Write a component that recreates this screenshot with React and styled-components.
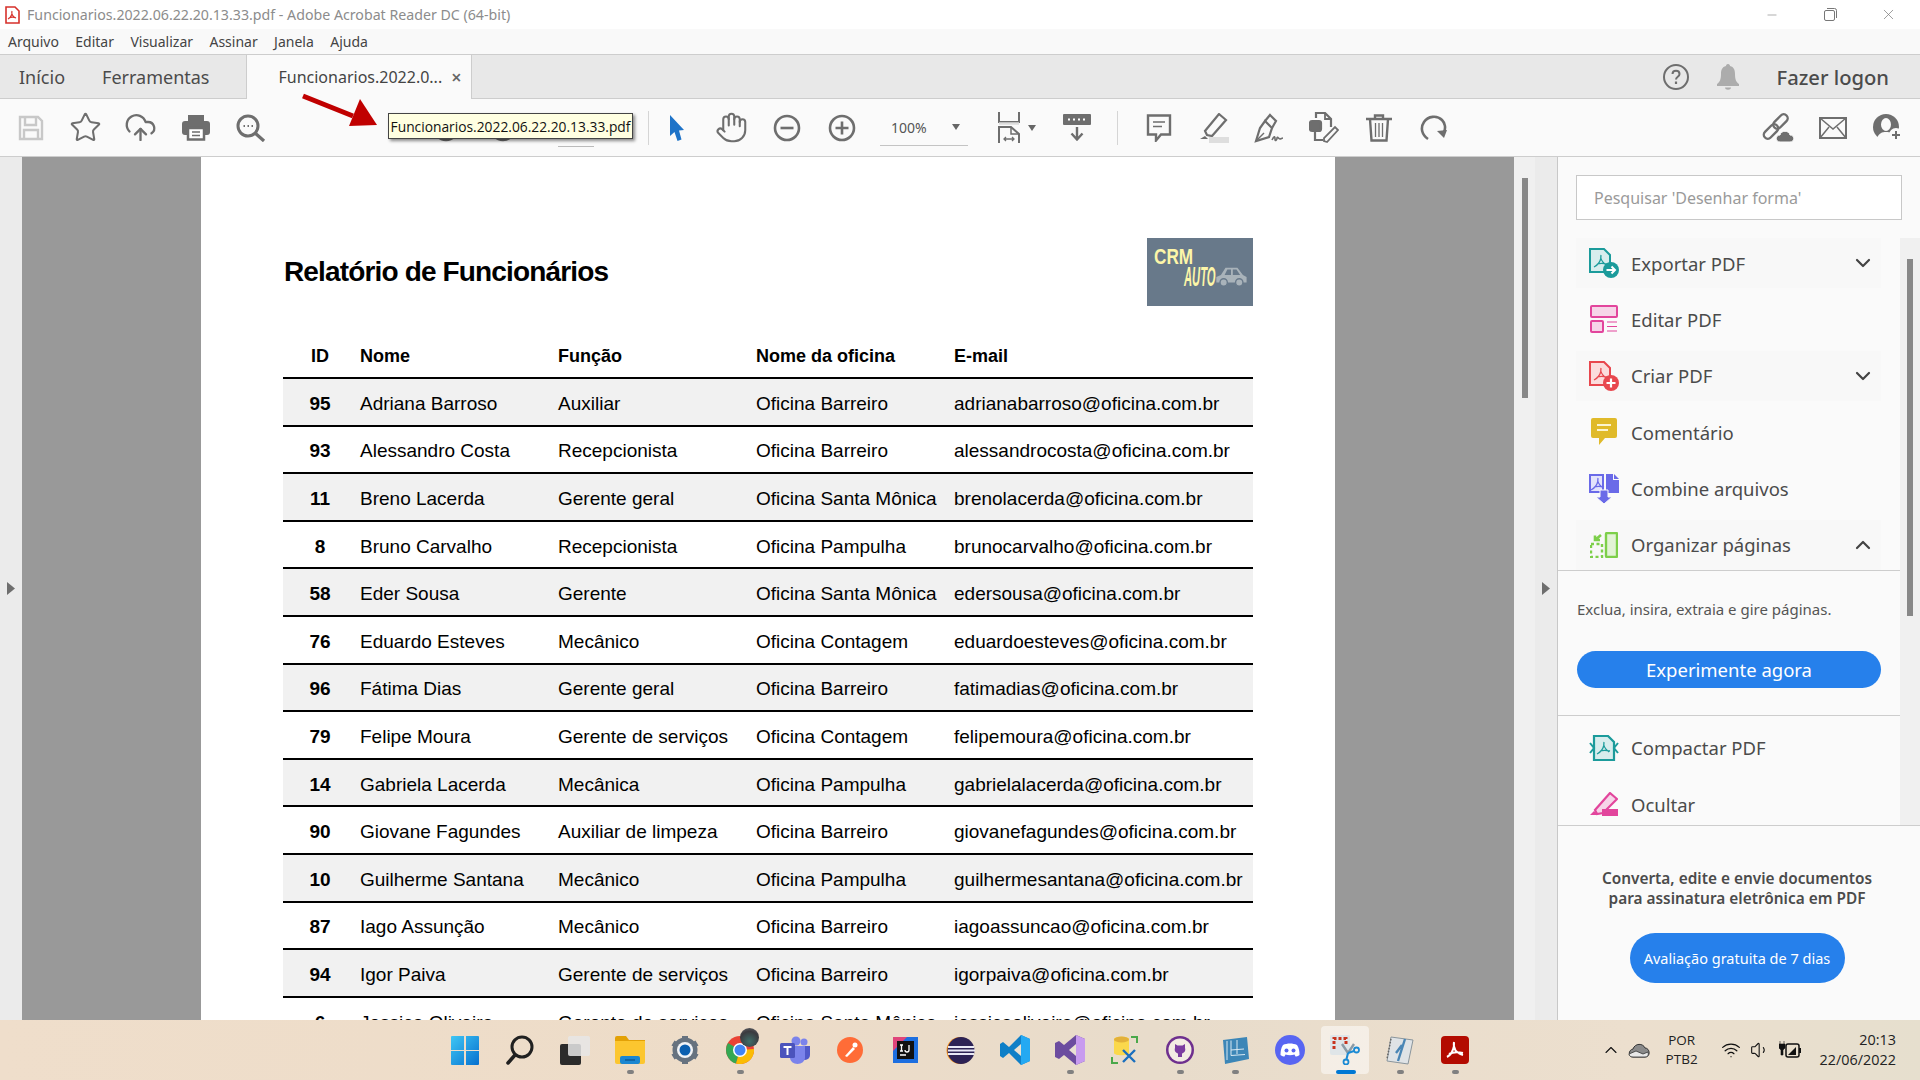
import React from 'react';
import styled, { createGlobalStyle } from 'styled-components';
import { Star, CloudUpload, Hand, ChevronDown, ChevronUp, X, Minus, Wifi, Volume1 } from 'lucide-react';

const employees = [
  [95, 'Adriana Barroso', 'Auxiliar', 'Oficina Barreiro', 'adrianabarroso@oficina.com.br'],
  [93, 'Alessandro Costa', 'Recepcionista', 'Oficina Barreiro', 'alessandrocosta@oficina.com.br'],
  [11, 'Breno Lacerda', 'Gerente geral', 'Oficina Santa Mônica', 'brenolacerda@oficina.com.br'],
  [8, 'Bruno Carvalho', 'Recepcionista', 'Oficina Pampulha', 'brunocarvalho@oficina.com.br'],
  [58, 'Eder Sousa', 'Gerente', 'Oficina Santa Mônica', 'edersousa@oficina.com.br'],
  [76, 'Eduardo Esteves', 'Mecânico', 'Oficina Contagem', 'eduardoesteves@oficina.com.br'],
  [96, 'Fátima Dias', 'Gerente geral', 'Oficina Barreiro', 'fatimadias@oficina.com.br'],
  [79, 'Felipe Moura', 'Gerente de serviços', 'Oficina Contagem', 'felipemoura@oficina.com.br'],
  [14, 'Gabriela Lacerda', 'Mecânica', 'Oficina Pampulha', 'gabrielalacerda@oficina.com.br'],
  [90, 'Giovane Fagundes', 'Auxiliar de limpeza', 'Oficina Barreiro', 'giovanefagundes@oficina.com.br'],
  [10, 'Guilherme Santana', 'Mecânico', 'Oficina Pampulha', 'guilhermesantana@oficina.com.br'],
  [87, 'Iago Assunção', 'Mecânico', 'Oficina Barreiro', 'iagoassuncao@oficina.com.br'],
  [94, 'Igor Paiva', 'Gerente de serviços', 'Oficina Barreiro', 'igorpaiva@oficina.com.br'],
  [6, 'Jessica Oliveira', 'Gerente de serviços', 'Oficina Santa Mônica', 'jessicaoliveira@oficina.com.br'],
];

const GRAY = '#6e6e6e';

// Adobe swirl used inside the pdf icons
const Swirl = ({ color, x = 0, y = 0 }) => (
  <path
    d={`M${x + 7} ${y}c-1 4 1 7 5 10M${x + 7} ${y + 3}c-1 4-3 7-7 9M${x + 3} ${y + 9}c3-1 6-1 10 0`}
    fill="none"
    stroke={color}
    strokeWidth="1.3"
  />
);

const SaveIcon = () => (
  <svg width="26" height="26" viewBox="0 0 26 26" fill="none" stroke="#c8c8c8" strokeWidth="2.4">
    <path d="M2 2h18l4 4v18H2z" />
    <path d="M7 2v8h11V2M6 24v-9h14v9" />
  </svg>
);

const PrintIcon = () => (
  <svg width="28" height="27" viewBox="0 0 28 27">
    <path d="M6 1h16v7H6z" fill={GRAY} />
    <rect y="7" width="28" height="14" rx="3" fill={GRAY} />
    <rect x="6" y="14" width="16" height="11.5" fill="#fff" stroke={GRAY} strokeWidth="2.5" />
    <path d="M10 18h8M10 21.5h8" stroke={GRAY} strokeWidth="1.6" />
  </svg>
);

const ZoomIcon = () => (
  <svg width="30" height="28" viewBox="0 0 30 28" fill="none" stroke={GRAY}>
    <circle cx="12" cy="12" r="10" strokeWidth="3" />
    <path d="M19 19l9 8" strokeWidth="3.2" />
    <path d="M7.5 12h1.5M11.5 12h1.5M15.5 12h1.5" strokeWidth="2" />
  </svg>
);

const CircleArrow = ({ up }) => (
  <svg width="28" height="28" viewBox="0 0 28 28" fill="none" stroke={GRAY} strokeWidth="2.4">
    <circle cx="14" cy="14" r="12" />
    <path d={up ? 'M14 20V8M9 13l5-5 5 5' : 'M14 8v12M9 15l5 5 5-5'} />
  </svg>
);

const CursorIcon = () => (
  <svg width="16" height="26" viewBox="0 0 16 26">
    <path d="M1 0l14 15-5 .5 2.5 9-4 1.5L5.500 17 1 21z" fill="#1e73c8" />
  </svg>
);

const CircleSign = ({ plus }) => (
  <svg width="28" height="28" viewBox="0 0 28 28" fill="none" stroke={GRAY} strokeWidth="2.6">
    <circle cx="14" cy="14" r="12" />
    <path d={plus ? 'M7.500 14h13M14 7.500v13' : 'M7.500 14h13'} />
  </svg>
);

const FitIcon = () => (
  <svg width="22" height="31" viewBox="0 0 22 31" fill="none" stroke={GRAY} strokeWidth="2">
    <path d="M1 0v10h20V0" />
    <path d="M1 11.500h20" stroke="#ddd" strokeWidth="2.500" />
    <path d="M1 31V15h12l8 7v9" />
    <path d="M13 15v7h8" strokeWidth="1.500" />
    <path d="M6 27h10M8 25l-2 2 2 2M14 25l2 2-2 2" strokeWidth="1.300" />
  </svg>
);

const KeyboardDownIcon = () => (
  <svg width="28" height="27" viewBox="0 0 28 27">
    <rect width="28" height="11" rx="1" fill={GRAY} />
    <path d="M5 5.500h2M10 5.500h2M15 5.500h2M20 5.500h2" stroke="#fff" strokeWidth="2" />
    <path d="M14 13v12M8.500 19.500l5.500 6 5.500-6" fill="none" stroke={GRAY} strokeWidth="2.400" />
  </svg>
);

const CommentIcon = () => (
  <svg width="26" height="28" viewBox="0 0 26 28" fill="none" stroke={GRAY} strokeWidth="2.400">
    <path d="M2 1.500h22v19h-9l-5 6v-6H2z" />
    <path d="M7 8h12M7 12.500h9" strokeWidth="1.600" />
  </svg>
);

const HighlightIcon = () => (
  <svg width="30" height="30" viewBox="0 0 30 30">
    <path d="M20 1l7 6-14 16-5-1-2-4z" fill="none" stroke={GRAY} strokeWidth="2.200" />
    <path d="M6 23l3 3H1z" fill={GRAY} />
    <rect x="10" y="24" width="20" height="6" fill="#dedede" />
  </svg>
);

const SignIcon = () => (
  <svg width="30" height="30" viewBox="0 0 30 30" fill="none" stroke={GRAY} strokeWidth="2.200">
    <path d="M11 8l7 7-3 9-13 4 4-13z" />
    <path d="M2 28l8-8" strokeWidth="1.500" />
    <path d="M11 8l5-6 6 6-4 7" />
    <path d="M18 27c2-4 3-4 3-1s2 1 2-1 2 1 3 1 2-1 3-1" strokeWidth="1.600" />
  </svg>
);

const EditDocIcon = () => (
  <svg width="30" height="31" viewBox="0 0 30 31" fill="none" stroke={GRAY} strokeWidth="2.200">
    <path d="M7 6V1h9l6 6v8" />
    <path d="M16 1v6h6" strokeWidth="1.800" />
    <rect x="1" y="9" width="11" height="10" rx="2" fill={GRAY} />
    <path d="M6 20v8h8" />
    <path d="M18 30l-3-1 0-3 11-11 3 3z" strokeWidth="1.800" />
  </svg>
);

const TrashIcon = () => (
  <svg width="26" height="28" viewBox="0 0 26 28" fill="none" stroke={GRAY} strokeWidth="2.400">
    <path d="M0 5h26M9 5V1.500h8V5" />
    <path d="M4 5l1.500 21.500h15L22 5" />
    <path d="M9.500 9v14M13 9v14M16.500 9v14" strokeWidth="1.300" />
  </svg>
);

const RotateIcon = () => (
  <svg width="28" height="28" viewBox="0 0 28 28" fill="none" stroke={GRAY} strokeWidth="2.600">
    <path d="M8 25C2 21 0 14 4 8c4-6 13-7 18-2 3 3 4 8 2 12" />
    <path d="M17 17l7 7 3-8z" fill={GRAY} stroke="none" />
  </svg>
);

const LinkCloudIcon = () => (
  <svg width="32" height="29" viewBox="0 0 32 29">
    <g fill="none" stroke={GRAY} strokeWidth="2.400">
      <rect x="14.500" y="0" width="8" height="17" rx="4" transform="rotate(45 18.500 8.500)" />
      <rect x="5" y="10" width="8" height="17" rx="4" transform="rotate(45 9 18.500)" />
    </g>
    <path d="M18 29c-5 0-5-7 0-7 1-5 9-5 10 0 5 0 5 7 0 7z" fill={GRAY} stroke="#fafafa" strokeWidth="1" />
  </svg>
);

const MailIcon = () => (
  <svg width="28" height="22" viewBox="0 0 28 22" fill="none" stroke={GRAY} strokeWidth="2">
    <rect x="1" y="1" width="26" height="20" />
    <path d="M1 1l13 11L27 1M1 21l9-11M27 21l-9-11" strokeWidth="1.500" />
  </svg>
);

const UserAddIcon = () => (
  <svg width="30" height="28" viewBox="0 0 30 28">
    <circle cx="13" cy="13" r="13" fill={GRAY} />
    <ellipse cx="13" cy="10.500" rx="5" ry="6.500" fill="#fafafa" />
    <path d="M4 24c2-5 5-6 9-6s7 1 9 6c-4 3-14 3-18 0z" fill="#fafafa" />
    <circle cx="23" cy="21" r="7" fill="#fafafa" />
    <path d="M23 17v8M19 21h8" stroke={GRAY} strokeWidth="2" />
  </svg>
);

const HelpIcon = () => (
  <svg width="26" height="26" viewBox="0 0 26 26" fill="none" stroke={GRAY} strokeWidth="2">
    <circle cx="13" cy="13" r="12" />
    <path d="M9.500 10c0-4.500 7-4.500 7 0 0 3-3.500 2.500-3.500 5.500" strokeWidth="2" />
    <path d="M13 17.500v2.500" strokeWidth="2.200" />
  </svg>
);

const BellIcon = () => (
  <svg width="22" height="26" viewBox="0 0 22 26">
    <path d="M11 0c1.500 0 2 1 2 2 4 1 5 4 5 8 0 5 1 8 4 10v2H0v-2c3-2 4-5 4-10 0-4 1-7 5-8 0-1 .5-2 2-2z" fill="#acacac" />
    <path d="M8 23.500h6c0 3-6 3-6 0z" fill="#acacac" />
  </svg>
);

const RestoreIcon = () => (
  <svg width="13" height="13" viewBox="0 0 13 13" fill="none" stroke="#777" strokeWidth="1">
    <rect x=".5" y="2.500" width="10" height="10" rx="1.500" />
    <path d="M3 .5h7.500a2 2 0 0 1 2 2V10" />
  </svg>
);

const PdfFileIcon = () => (
  <svg width="15" height="18" viewBox="0 0 15 18">
    <path d="M1 1h9l4 4v12H1z" fill="#fff" stroke="#d6312b" strokeWidth="1.600" />
    <path d="M7 5c-1 3 1 6 4 7M7 8c-1 3-2 4-4 5M4 12c2-1 5-1 7 0" fill="none" stroke="#d6312b" strokeWidth="1.200" />
  </svg>
);

const ExportIcon = () => (
  <svg width="30" height="30" viewBox="0 0 30 30">
    <path d="M1 1h14l6 6v17H1z" fill="#d7eded" stroke="#1b9b9b" strokeWidth="2" />
    <Swirl color="#1b9b9b" x={5} y={7} />
    <circle cx="22" cy="22" r="8" fill="#1b9b9b" />
    <path d="M17.500 22h8M22.500 18.500l3.500 3.500-3.500 3.500" fill="none" stroke="#fff" strokeWidth="2" />
  </svg>
);

const EditPdfIcon = () => (
  <svg width="28" height="28" viewBox="0 0 28 28" stroke="#e2459c" fill="#f6d5e8" strokeWidth="2">
    <rect x="1" y="1" width="26" height="11" rx="1" />
    <rect x="1" y="16" width="12" height="11" rx="1" />
    <path d="M17 17h10M17 21.500h10M17 26h10" strokeWidth="1.200" />
  </svg>
);

const CreateIcon = () => (
  <svg width="30" height="30" viewBox="0 0 30 30">
    <path d="M1 1h14l6 6v17H1z" fill="#fbdcdc" stroke="#e8474e" strokeWidth="2" />
    <Swirl color="#e8474e" x={5} y={7} />
    <circle cx="22" cy="22" r="8" fill="#e8474e" />
    <path d="M17.500 22h9M22 17.500v9" stroke="#fff" strokeWidth="2.200" />
  </svg>
);

const NoteIcon = () => (
  <svg width="26" height="28" viewBox="0 0 26 28">
    <path d="M2 0h22a2 2 0 0 1 2 2v16a2 2 0 0 1-2 2H14l-6 7v-7H2a2 2 0 0 1-2-2V2a2 2 0 0 1 2-2z" fill="#e0ba2a" />
    <path d="M6 7h14M6 12h11" stroke="#fbf4d0" strokeWidth="2" />
  </svg>
);

const CombineIcon = () => (
  <svg width="30" height="30" viewBox="0 0 30 30">
    <path d="M1 1h13v17H1z" fill="#e3e3fb" stroke="#6a6ae8" strokeWidth="2" />
    <Swirl color="#6a6ae8" x={2} y={4} />
    <path d="M17 0h7v6h6v13H17z" fill="#6a6ae8" />
    <path d="M25 0l5 5h-5z" fill="#6a6ae8" />
    <path d="M11 16h8v7h4l-8 7-8-7h4z" fill="#6a6ae8" stroke="#fafafa" strokeWidth="1" />
  </svg>
);

const OrganizeIcon = () => (
  <svg width="28" height="26" viewBox="0 0 28 26" fill="none" stroke="#7dcf4a" strokeWidth="2.400">
    <rect x="16" y="1" width="11" height="24" rx="1" fill="#e2f3d6" />
    <path d="M1 12h11v13H1z" strokeDasharray="3 2.500" />
    <path d="M11 3L5 8M5 3.500V8h5" strokeWidth="2.600" />
  </svg>
);

const CompressIcon = () => (
  <svg width="30" height="26" viewBox="0 0 30 26">
    <path d="M5 1h14l6 6v18H5z" fill="#d7eded" stroke="#1b9b9b" strokeWidth="2.200" />
    <Swirl color="#1b9b9b" x={8} y={7} />
    <path d="M1 8l4 5-4 5M29 8l-4 5 4 5" fill="none" stroke="#1b9b9b" strokeWidth="2" />
  </svg>
);

const RedactIcon = () => (
  <svg width="28" height="25" viewBox="0 0 28 25">
    <path d="M20 1l7 6-14 14-6 1-2-4z" fill="#f6d5e8" stroke="#e2459c" strokeWidth="2.200" />
    <path d="M4 19l4 4H0z" fill="#e2459c" />
    <rect x="12" y="17" width="16" height="7" fill="#e2459c" />
  </svg>
);

const PanelTriangle = () => (
  <svg width="8" height="13" viewBox="0 0 8 13">
    <path d="M0 0l8 6.500L0 13z" fill="#6e6e6e" />
  </svg>
);

const ArrowOverlay = () => (
  <svg width="80" height="36" viewBox="0 0 80 36">
    <path d="M1 3l50 20" stroke="#c00000" strokeWidth="5" fill="none" />
    <path d="M75 32L47 33l11-27z" fill="#c00000" />
  </svg>
);

const CarIcon = () => (
  <svg width="34" height="22" viewBox="0 0 36 24">
    <path d="M2 19v-6l5-2 5-8h13l6 8 4 2v6z" fill="#a9b3ba" />
    <path d="M14 5h4v6h-7zM20 5h4l4 6h-8z" fill="#68798a" />
    <circle cx="10" cy="19" r="4" fill="#a9b3ba" stroke="#68798a" strokeWidth="1.500" />
    <circle cx="27" cy="19" r="4" fill="#a9b3ba" stroke="#68798a" strokeWidth="1.500" />
  </svg>
);

// Taskbar apps
const WindowsLogo = () => (
  <svg width="28" height="29" viewBox="0 0 28 29">
    <defs>
      <linearGradient id="winG" x1="0" y1="0" x2="1" y2="1">
        <stop offset="0" stopColor="#3fc6f4" />
        <stop offset="1" stopColor="#0670cf" />
      </linearGradient>
    </defs>
    <path d="M1 0h12v14H0V1a1 1 0 0 1 1-1zM15 0h12a1 1 0 0 1 1 1v13H15zM0 15h13v14H1a1 1 0 0 1-1-1zM15 15h13v13a1 1 0 0 1-1 1H15z" fill="url(#winG)" />
  </svg>
);

const SearchApp = () => (
  <svg width="28" height="30" viewBox="0 0 28 30" fill="none" stroke="#202020">
    <circle cx="16" cy="12" r="10" strokeWidth="3" />
    <path d="M9 20l-7 8" strokeWidth="3.500" strokeLinecap="round" />
  </svg>
);

const TaskView = () => (
  <svg width="30" height="29" viewBox="0 0 30 29">
    <rect y="8" width="21" height="21" rx="2" fill="#2b2b2b" />
    <rect x="8" width="22" height="20" rx="2" fill="#e6e6e6" fillOpacity=".85" />
  </svg>
);

const Explorer = () => (
  <svg width="30" height="28" viewBox="0 0 30 28">
    <path d="M0 2a2 2 0 0 1 2-2h9l3 4h16v6H0z" fill="#e3a106" />
    <path d="M0 5h30v21a2 2 0 0 1-2 2H2a2 2 0 0 1-2-2z" fill="#fcc62f" />
    <rect x="5" y="20" width="20" height="8" rx="2" fill="#1b86d1" />
    <path d="M10 24h10" stroke="#0b4f8a" strokeWidth="1.200" />
  </svg>
);

const SettingsApp = () => (
  <svg width="30" height="30" viewBox="0 0 30 30">
    <circle cx="15" cy="15" r="10" fill="none" stroke="#66727f" strokeWidth="5" />
    <path d="M15 15V1M15 15L27 8M15 15L27 22M15 15V29M15 15L3 22M15 15L3 8" stroke="#66727f" strokeWidth="6" />
    <circle cx="15" cy="15" r="8" fill="#f1f3f6" />
    <circle cx="15" cy="15" r="5.500" fill="#0a5fb0" />
  </svg>
);

const ChromeApp = () => (
  <AppOverlayWrap>
    <svg width="28" height="28" viewBox="0 0 28 28">
      <circle cx="14" cy="14" r="14" fill="#ea4335" />
      <path d="M14 14L2 7A14 14 0 0 0 10 27.500z" fill="#34a853" />
      <path d="M14 14L10 27.500A14 14 0 0 0 28 13z" fill="#fbbc04" />
      <circle cx="14" cy="14" r="7" fill="#fff" />
      <circle cx="14" cy="14" r="5.500" fill="#4285f4" />
    </svg>
    <ProfileBubble />
  </AppOverlayWrap>
);

const TeamsApp = () => (
  <svg width="30" height="28" viewBox="0 0 30 28">
    <circle cx="24" cy="6" r="3.500" fill="#7b83eb" />
    <circle cx="16" cy="5" r="4.500" fill="#7b83eb" />
    <path d="M20 10h10v9a5 5 0 0 1-10 0z" fill="#5059c9" />
    <path d="M10 10h15v12a7.500 6 0 0 1-15 0z" fill="#7b83eb" />
    <rect y="7" width="15" height="15" rx="1.500" fill="#4b53bc" />
    <path d="M3.500 11h8M7.500 11v8" stroke="#fff" strokeWidth="2" />
  </svg>
);

const PostmanApp = () => (
  <svg width="26" height="26" viewBox="0 0 26 26">
    <circle cx="13" cy="13" r="13" fill="#ff6c37" />
    <path d="M8 19l8-9 2 2-8 8z" fill="#fff" />
    <circle cx="18" cy="8" r="2.500" fill="#fff" />
  </svg>
);

const IntellijApp = () => (
  <svg width="25" height="26" viewBox="0 0 25 26">
    <rect width="25" height="26" fill="#1d6fe0" />
    <path d="M0 0h14L0 14z" fill="#e0457b" />
    <rect x="4" y="4" width="17" height="18" fill="#111" />
    <path d="M7 8h3M8.500 8v6M7 14h3M16 8v5a2 2 0 0 1-4 0M7 18h6" stroke="#fff" strokeWidth="1.300" fill="none" />
  </svg>
);

const EclipseApp = () => (
  <svg width="29" height="27" viewBox="0 0 29 27">
    <circle cx="14" cy="13.500" r="13.500" fill="#f7941e" />
    <circle cx="15" cy="13.500" r="13.500" fill="#2c2255" />
    <path d="M2 10h26M2 13.500h27M2 17h26" stroke="#e8e8f5" strokeWidth="1.800" />
  </svg>
);

const VsCodeApp = () => (
  <svg width="30" height="30" viewBox="0 0 30 30">
    <path d="M21 0l9 4v22l-9 4-12-12-6 5-3-2v-12l3-2 6 5z" fill="#0e7fc7" />
    <path d="M21 0l9 4v22l-9 4z" fill="#24a9f2" />
    <path d="M21 9l-7 6 7 6z" fill="#e9e1d3" />
  </svg>
);

const VisualStudioApp = () => (
  <svg width="30" height="30" viewBox="0 0 30 30">
    <path d="M21 0l9 4v22l-9 4-12-10-5 4-4-2V8l4-2 5 4z" fill="#6c4c9f" />
    <path d="M21 0l9 4v22l-9 4z" fill="#c89bef" />
    <path d="M21 9l-7 6 7 6z" fill="#e9e1d3" />
  </svg>
);

const DataToolApp = () => (
  <svg width="28" height="28" viewBox="0 0 28 28">
    <path d="M3 3c0-3 15-3 15 0v14c0 3-15 3-15 0z" fill="#fbd84b" />
    <ellipse cx="10.500" cy="3.500" rx="7.500" ry="3" fill="#e3b13a" />
    <path d="M20 1h6v6M1 21v6h6" fill="none" stroke="#4aa84a" strokeWidth="2" />
    <path d="M12 14l12 12M24 14L12 26" stroke="#1a6fbe" strokeWidth="2.400" />
  </svg>
);

const GithubApp = () => (
  <svg width="28" height="28" viewBox="0 0 28 28">
    <circle cx="14" cy="14" r="14" fill="#6e2f8e" />
    <circle cx="14" cy="14" r="11.500" fill="#f3ece3" />
    <path d="M9 8l2.500 1.500h5L19 8v4c1 3-1 5-3 5.500V21h-4v-3.500C10 17 8 15 9 12z" fill="#7b3ca0" />
  </svg>
);

const BookApp = () => (
  <svg width="27" height="27" viewBox="0 0 27 27">
    <path d="M1 3l24-3 2 22-24 5z" fill="#3c86b7" />
    <path d="M5 4v19M9 3.500v15l14 -1M15 3v14M9 13l13-1" stroke="#d7e8f2" strokeWidth="1" fill="none" />
  </svg>
);

const DiscordApp = () => (
  <svg width="30" height="30" viewBox="0 0 30 30">
    <circle cx="15" cy="15" r="15" fill="#5865f2" />
    <path d="M8 10c4-2 10-2 14 0 2 3 2.500 6 2.500 10-1.500 1-3 1.500-4 1.500l-1-2c-3 1-6 1-9 0l-1 2c-1 0-2.500-.5-4-1.500 0-4 .5-7 2.500-10z" fill="#fff" />
    <circle cx="11.500" cy="15.500" r="2" fill="#5865f2" />
    <circle cx="18.500" cy="15.500" r="2" fill="#5865f2" />
  </svg>
);

const SnipApp = () => (
  <svg width="30" height="30" viewBox="0 0 30 30">
    <rect x="0" y="0" width="20" height="20" rx="2" fill="#dfe5e8" />
    <path d="M4 14V3.500h12V10" fill="none" stroke="#c8341e" strokeWidth="3" strokeDasharray="3 2" />
    <path d="M12 9l6 9M24 9l-6 9" stroke="#8a9aa5" strokeWidth="2.400" />
    <path d="M18 18l6-2" stroke="#1a8ad4" strokeWidth="2" />
    <circle cx="26.500" cy="15" r="2.500" fill="none" stroke="#1a8ad4" strokeWidth="1.800" />
    <path d="M18 18l-1.500 6" stroke="#1a8ad4" strokeWidth="2" />
    <circle cx="16" cy="27" r="2.500" fill="none" stroke="#1a8ad4" strokeWidth="1.800" />
  </svg>
);

const NotebookApp = () => (
  <svg width="28" height="30" viewBox="0 0 28 30">
    <path d="M5 2l22 3-5 24-21-3z" fill="#dfe3e6" stroke="#8a959c" strokeWidth="1" />
    <path d="M19 4L12 26M16 10l-6 8" stroke="#4a86b5" strokeWidth="2.400" />
    <path d="M5 4L1 24" stroke="#666" strokeWidth="1.500" strokeDasharray="1.500 1.500" />
  </svg>
);

const AcrobatApp = () => (
  <svg width="28" height="28" viewBox="0 0 28 28">
    <rect width="28" height="28" rx="4" fill="#b30b00" />
    <path d="M13 6c-1 6 2 11 9 13M13 10c-1 5-3 9-7 11M8 18c4-2 9-2 14-1" fill="none" stroke="#fff" strokeWidth="2" />
  </svg>
);

const CloudTray = () => (
  <svg width="22" height="15" viewBox="0 0 22 15">
    <path d="M5 14C0 14 0 7 5 6c2-6 10-6 12-1 5 0 6 9 0 9z" fill="#8a8a8a" stroke="#333" strokeWidth="1" />
    <path d="M1 11l7-3 7 3 5-2c1 3 0 5-3 5H5c-2 0-4-1-4-3z" fill="#e8e8e8" stroke="#333" strokeWidth=".8" />
  </svg>
);

const BatteryTray = () => (
  <svg width="22" height="18" viewBox="0 0 22 18">
    <rect x="7" y="3" width="13" height="13" rx="2" fill="none" stroke="#111" strokeWidth="1.500" />
    <path d="M21 7v5" stroke="#111" strokeWidth="2" />
    <path d="M9 14l8-8v8z" fill="#111" />
    <path d="M1 3v-3M5 3v-3M0 3h6v4l-2 2v5H2V9L0 7z" fill="#111" stroke="#111" strokeWidth=".6" />
  </svg>
);

const apps = [
  { key: 'win', icon: <WindowsLogo /> },
  { key: 'search', icon: <SearchApp /> },
  { key: 'view', icon: <TaskView /> },
  { key: 'explorer', icon: <Explorer />, open: true },
  { key: 'settings', icon: <SettingsApp /> },
  { key: 'chrome', icon: <ChromeApp />, open: true },
  { key: 'teams', icon: <TeamsApp /> },
  { key: 'postman', icon: <PostmanApp /> },
  { key: 'intellij', icon: <IntellijApp /> },
  { key: 'eclipse', icon: <EclipseApp /> },
  { key: 'vscode', icon: <VsCodeApp /> },
  { key: 'vs', icon: <VisualStudioApp />, open: true },
  { key: 'data', icon: <DataToolApp /> },
  { key: 'github', icon: <GithubApp />, open: true },
  { key: 'book', icon: <BookApp />, open: true },
  { key: 'discord', icon: <DiscordApp /> },
  { key: 'snip', icon: <SnipApp />, active: true },
  { key: 'notebook', icon: <NotebookApp />, open: true },
  { key: 'acrobat', icon: <AcrobatApp />, open: true },
];

const tools = [
  { key: 'Exportar PDF', icon: <ExportIcon />, chevron: 'down' },
  { key: 'Editar PDF', icon: <EditPdfIcon /> },
  { key: 'Criar PDF', icon: <CreateIcon />, chevron: 'down' },
  { key: 'Comentário', icon: <NoteIcon /> },
  { key: 'Combine arquivos', icon: <CombineIcon /> },
  { key: 'Organizar páginas', icon: <OrganizeIcon />, chevron: 'up' },
];

const App = () => {
  return (
    <Screen>
      <GlobalStyle />
      <TitleBar>
        <PdfFileIcon />
        <WindowTitle>Funcionarios.2022.06.22.20.13.33.pdf - Adobe Acrobat Reader DC (64-bit)</WindowTitle>
        <WindowButtons>
          <WindowButton><Minus size={14} strokeWidth={1} /></WindowButton>
          <WindowButton><RestoreIcon /></WindowButton>
          <WindowButton><X size={17} strokeWidth={1} /></WindowButton>
        </WindowButtons>
      </TitleBar>

      <MenuBar>
        {['Arquivo', 'Editar', 'Visualizar', 'Assinar', 'Janela', 'Ajuda'].map((m) => (
          <span key={m}>{m}</span>
        ))}
      </MenuBar>

      <TabBar>
        <TabLink>Início</TabLink>
        <TabLink>Ferramentas</TabLink>
        <ActiveTab>
          Funcionarios.2022.0...
          <TabClose>×</TabClose>
        </ActiveTab>
        <TabRight>
          <HelpIcon />
          <BellIcon />
          <Logon>Fazer logon</Logon>
        </TabRight>
      </TabBar>

      <Toolbar>
        <ToolSlot><SaveIcon /></ToolSlot>
        <ToolSlot><Star size={33} strokeWidth={1.5} color={GRAY} /></ToolSlot>
        <ToolSlot><CloudUpload size={33} strokeWidth={1.7} color={GRAY} /></ToolSlot>
        <ToolSlot><PrintIcon /></ToolSlot>
        <ToolSlot><ZoomIcon /></ToolSlot>

        <PageGroup>
          <CircleArrow up />
          <CircleArrow />
          <PageInput />
        </PageGroup>
        <ToolSeparator $gap={54} />

        <ToolSlot><CursorIcon /></ToolSlot>
        <ToolSlot><Hand size={33} strokeWidth={1.5} color={GRAY} /></ToolSlot>
        <ToolSlot><CircleSign /></ToolSlot>
        <ToolSlot><CircleSign plus /></ToolSlot>

        <ZoomBox>
          100%
          <Caret />
        </ZoomBox>

        <FitGroup>
          <FitIcon />
          <Caret />
        </FitGroup>
        <ToolSlot $offset={13}><KeyboardDownIcon /></ToolSlot>
        <ToolSeparator $gap={13} />

        <ToolSlot $offset={13}><CommentIcon /></ToolSlot>
        <ToolSlot><HighlightIcon /></ToolSlot>
        <ToolSlot><SignIcon /></ToolSlot>
        <ToolSlot><EditDocIcon /></ToolSlot>
        <ToolSlot><TrashIcon /></ToolSlot>
        <ToolSlot><RotateIcon /></ToolSlot>

        <ToolRight>
          <ToolSlot><LinkCloudIcon /></ToolSlot>
          <ToolSlot><MailIcon /></ToolSlot>
          <ToolSlot><UserAddIcon /></ToolSlot>
        </ToolRight>

        <ArrowSpot><ArrowOverlay /></ArrowSpot>
        <Tooltip>Funcionarios.2022.06.22.20.13.33.pdf</Tooltip>
      </Toolbar>

      <Main>
        <SideRail><PanelTriangle /></SideRail>
        <DocArea>
          <Page>
            <ReportHead>
              <ReportTitle>Relatório de Funcionários</ReportTitle>
              <Logo>
                <LogoCrm>CRM</LogoCrm>
                <LogoAuto>AUTO</LogoAuto>
                <LogoCar><CarIcon /></LogoCar>
              </Logo>
            </ReportHead>
            <HeadRow>
              <IdCell>ID</IdCell>
              <span>Nome</span>
              <span>Função</span>
              <span>Nome da oficina</span>
              <span>E-mail</span>
            </HeadRow>
            {employees.map((emp) => (
              <BodyRow key={emp[0]}>
                <IdCell>{emp[0]}</IdCell>
                <span>{emp[1]}</span>
                <span>{emp[2]}</span>
                <span>{emp[3]}</span>
                <span>{emp[4]}</span>
              </BodyRow>
            ))}
          </Page>
        </DocArea>
        <DocScroll><DocThumb /></DocScroll>
        <SideRail $bordered><PanelTriangle /></SideRail>

        <Panel>
          <PanelTop>
            <SearchBox>Pesquisar 'Desenhar forma'</SearchBox>
            <ToolsArea>
              <ToolsList>
                <ToolItems>
                  {tools.map((t) => (
                    <ToolItem key={t.key} $shaded={!!t.chevron}>
                      <ToolIcon>{t.icon}</ToolIcon>
                      <span>{t.key}</span>
                      {t.chevron === 'down' && <ChevronSpot><ChevronDown size={24} strokeWidth={2.2} /></ChevronSpot>}
                      {t.chevron === 'up' && <ChevronSpot><ChevronUp size={24} strokeWidth={2.2} /></ChevronSpot>}
                    </ToolItem>
                  ))}
                </ToolItems>
                <ExpandedBlock>
                  <Description>Exclua, insira, extraia e gire páginas.</Description>
                  <TryButton>Experimente agora</TryButton>
                </ExpandedBlock>
                <ToolItems>
                  <ToolItem>
                    <ToolIcon><CompressIcon /></ToolIcon>
                    <span>Compactar PDF</span>
                  </ToolItem>
                  <ToolItem>
                    <ToolIcon><RedactIcon /></ToolIcon>
                    <span>Ocultar</span>
                  </ToolItem>
                </ToolItems>
              </ToolsList>
              <PanelScroll><PanelThumb /></PanelScroll>
            </ToolsArea>
          </PanelTop>
          <Promo>
            <PromoText>
              Converta, edite e envie documentos
              <br />
              para assinatura eletrônica em PDF
            </PromoText>
            <TrialButton>Avaliação gratuita de 7 dias</TrialButton>
          </Promo>
        </Panel>
      </Main>

      <Taskbar>
        <AppStrip>
          {apps.map((a) => (
            <AppSlot key={a.key} $active={a.active}>
              {a.icon}
              {a.open && <OpenDot />}
              {a.active && <ActiveBar />}
            </AppSlot>
          ))}
        </AppStrip>
        <Tray>
          <ChevronUp size={20} strokeWidth={1.3} color="#111" />
          <TrayCloud><CloudTray /></TrayCloud>
          <Lang>
            <span>POR</span>
            <span>PTB2</span>
          </Lang>
          <TrayIcons>
            <Wifi size={20} strokeWidth={1.5} color="#111" />
            <Volume1 size={20} strokeWidth={1.3} color="#111" />
            <BatteryTray />
          </TrayIcons>
          <Clock>
            <span>20:13</span>
            <span>22/06/2022</span>
          </Clock>
        </Tray>
      </Taskbar>
    </Screen>
  );
};

export default App;

//===================
// Styled-Components
//===================

const GlobalStyle = createGlobalStyle`
  html, body {
    margin: 0;
    padding: 0;
    overflow: hidden;
  }
  * {
    box-sizing: border-box;
  }
`;

const Screen = styled.div`
  width: 1920px;
  height: 1080px;
  display: flex;
  flex-direction: column;
  overflow: hidden;
  background: #fafafa;
  font-family: 'Noto Sans', sans-serif;
  color: #4b4b4b;
`;

const TitleBar = styled.div`
  height: 29px;
  flex: none;
  display: flex;
  align-items: center;
  padding-left: 5px;
  background: #fff;
`;

const WindowTitle = styled.div`
  margin-left: 7px;
  font-size: 14.2px;
  color: #8c8c8c;
`;

const WindowButtons = styled.div`
  margin-left: auto;
  display: flex;
  padding-right: 3px;
`;

const WindowButton = styled.div`
  width: 58px;
  height: 29px;
  display: flex;
  align-items: center;
  justify-content: center;
  color: #777;
`;

const MenuBar = styled.div`
  height: 26px;
  flex: none;
  display: flex;
  align-items: center;
  gap: 16.4px;
  padding-left: 8px;
  font-size: 14px;
  color: #444;
  background: #f9f9f9;
  border-bottom: 1px solid #cdcdcd;
`;

const TabBar = styled.div`
  height: 44px;
  flex: none;
  display: flex;
  align-items: stretch;
  padding-left: 19px;
  background: #e8e8e8;
  border-bottom: 1px solid #cdcdcd;
`;

const TabLink = styled.div`
  display: flex;
  align-items: center;
  margin-right: 37px;
  font-size: 18px;
  color: #4b4b4b;
`;

const ActiveTab = styled.div`
  width: 226px;
  height: 44px;
  display: flex;
  align-items: center;
  padding-left: 31px;
  font-size: 16px;
  color: #444;
  background: #fafafa;
  border-left: 1px solid #cdcdcd;
  border-right: 1px solid #cdcdcd;
`;

const TabClose = styled.span`
  margin-left: 9px;
  font-size: 18px;
  font-weight: 600;
  color: #666;
`;

const TabRight = styled.div`
  margin-left: auto;
  display: flex;
  align-items: center;
  padding-right: 31px;
  gap: 28px;
`;

const Logon = styled.div`
  margin-left: 9.5px;
  font-size: 20.2px;
  font-weight: 500;
  color: #4b4b4b;
`;

const Toolbar = styled.div`
  position: relative;
  height: 58px;
  flex: none;
  display: flex;
  align-items: center;
  padding-left: 3px;
  background: #fafafa;
  border-bottom: 1px solid #cdcdcd;
`;

const ToolSlot = styled.div`
  width: 55px;
  flex: none;
  display: flex;
  align-items: center;
  justify-content: center;
  margin-left: ${(p) => p.$offset || 0}px;
`;

const PageGroup = styled.div`
  display: flex;
  align-items: center;
  gap: 29px;
  margin-left: 154px;
`;

const PageInput = styled.div`
  width: 36px;
  height: 30px;
  margin-left: 12px;
  margin-top: 8px;
  border-bottom: 1px solid #bbb;
`;

const ToolSeparator = styled.div`
  width: 1px;
  height: 34px;
  margin-left: ${(p) => p.$gap}px;
  background: #d5d5d5;
`;

const ZoomBox = styled.div`
  width: 88px;
  height: 36px;
  margin-left: 11px;
  display: flex;
  align-items: center;
  justify-content: space-between;
  padding: 0 8px 0 11px;
  font-size: 14px;
  color: #555;
  border-bottom: 1px solid #c4c4c4;
`;

const Caret = styled.span`
  width: 0;
  height: 0;
  border-left: 4px solid transparent;
  border-right: 4px solid transparent;
  border-top: 6px solid #666;
`;

const FitGroup = styled.div`
  display: flex;
  align-items: center;
  gap: 8px;
  margin-left: 30px;
`;

const ToolRight = styled.div`
  margin-left: auto;
  display: flex;
  padding-right: 5px;
`;

const ArrowSpot = styled.div`
  position: absolute;
  left: 302px;
  top: -6px;
  line-height: 0;
`;

const Tooltip = styled.div`
  position: absolute;
  left: 388px;
  top: 14px;
  width: 245px;
  height: 26px;
  display: flex;
  align-items: center;
  justify-content: center;
  font-family: 'Open Sans', sans-serif;
  font-size: 13.8px;
  color: #111;
  background: #ffffe1;
  border: 1px solid #444;
  box-shadow: 2px 2px 3px rgba(0, 0, 0, 0.45);
`;

const Main = styled.div`
  flex: 1;
  min-height: 0;
  display: flex;
  overflow: hidden;
`;

const SideRail = styled.div`
  width: ${(p) => (p.$bordered ? '23px' : '22px')};
  flex: none;
  display: flex;
  align-items: center;
  justify-content: center;
  background: #ebebeb;
  border-right: ${(p) => (p.$bordered ? '1px solid #c8c8c8' : 'none')};
`;

const DocArea = styled.div`
  width: 1492px;
  flex: none;
  display: flex;
  justify-content: center;
  background: #999;
  overflow: hidden;
`;

const Page = styled.div`
  width: 1134px;
  flex: none;
  padding: 81px 82px 0;
  background: #fff;
  font-family: 'Liberation Sans', Arial, sans-serif;
  color: #000;
`;

const ReportHead = styled.div`
  height: 68px;
  display: flex;
  align-items: center;
  justify-content: space-between;
  margin-bottom: 25px;
`;

const ReportTitle = styled.h1`
  margin: 0 0 0 1px;
  font-size: 28px;
  font-weight: 700;
  letter-spacing: -0.85px;
`;

const Logo = styled.div`
  position: relative;
  width: 106px;
  height: 68px;
  background: #68798a;
`;

const LogoCrm = styled.span`
  position: absolute;
  left: 7px;
  top: 6px;
  font-family: 'Liberation Sans', sans-serif;
  font-size: 22px;
  font-weight: 700;
  transform: scaleX(0.78);
  transform-origin: left;
  color: #fdf6a8;
`;

const LogoAuto = styled.span`
  position: absolute;
  left: 37px;
  top: 23px;
  font-family: 'Liberation Sans', sans-serif;
  font-size: 28px;
  font-style: italic;
  font-weight: 700;
  transform: scaleX(0.4);
  transform-origin: left;
  color: #fdf6a8;
`;

const LogoCar = styled.div`
  position: absolute;
  right: 5px;
  top: 27px;
  line-height: 0;
`;

const tableColumns = `
  display: grid;
  grid-template-columns: 77px 198px 198px 198px 1fr;
  align-items: center;
  padding-top: 4px;
`;

const HeadRow = styled.div`
  ${tableColumns}
  height: 48px;
  font-size: 18px;
  font-weight: 700;
  border-bottom: 2px solid #000;
`;

const BodyRow = styled.div`
  ${tableColumns}
  height: 47.6px;
  font-size: 19px;
  border-bottom: 2px solid #000;
  &:nth-child(odd) {
    background: #f1f1f1;
  }
`;

const IdCell = styled.span`
  width: 74px;
  text-align: center;
  font-weight: 700;
`;

const DocScroll = styled.div`
  width: 21px;
  flex: none;
  padding: 21px 8px 0;
  background: #f0f0f0;
`;

const DocThumb = styled.div`
  width: 6px;
  height: 220px;
  background: #888;
`;

const Panel = styled.div`
  flex: 1;
  display: flex;
  flex-direction: column;
  background: #fafafa;
`;

const PanelTop = styled.div`
  height: 669px;
  flex: none;
  display: flex;
  flex-direction: column;
  overflow: hidden;
  border-bottom: 1px solid #cdcdcd;
`;

const SearchBox = styled.div`
  width: 326px;
  height: 45px;
  flex: none;
  margin: 18px 0 18px 18px;
  display: flex;
  align-items: center;
  padding-left: 17px;
  font-size: 16px;
  color: #9a9a9a;
  background: #fff;
  border: 1px solid #c8c8c8;
`;

const ToolsArea = styled.div`
  flex: 1;
  min-height: 0;
  display: flex;
  overflow: hidden;
`;

const ToolsList = styled.div`
  flex: 1;
  min-width: 0;
`;

const ToolItems = styled.div`
  display: flex;
  flex-direction: column;
  gap: 6.4px;
  padding-left: 18px;
  padding-right: 19px;
`;

const ToolItem = styled.div`
  position: relative;
  height: 50px;
  flex: none;
  display: flex;
  align-items: center;
  gap: 11px;
  padding-left: 12px;
  font-size: 18.5px;
  color: #4b4b4b;
  background: ${(p) => (p.$shaded ? '#f8f8f8' : 'transparent')};
`;

const ToolIcon = styled.div`
  width: 32px;
  display: flex;
  align-items: center;
  justify-content: center;
`;

const ChevronSpot = styled.div`
  margin-left: auto;
  padding-right: 6px;
  display: flex;
  color: #444;
`;

const ExpandedBlock = styled.div`
  height: 146px;
  margin-bottom: 7px;
  padding: 26px 18px 0 19px;
  border-top: 1px solid #cdcdcd;
  border-bottom: 1px solid #cdcdcd;
`;

const Description = styled.div`
  height: 24px;
  font-size: 15px;
  line-height: 24px;
  color: #555;
`;

const TryButton = styled.div`
  width: 304px;
  height: 37px;
  margin-top: 30px;
  display: flex;
  align-items: center;
  justify-content: center;
  font-size: 18.5px;
  color: #fff;
  background: #2680eb;
  border-radius: 19px;
`;

const PanelScroll = styled.div`
  width: 20px;
  flex: none;
  padding: 21px 7px 0;
  background: #f0f0f0;
`;

const PanelThumb = styled.div`
  width: 6px;
  height: 357px;
  background: #888;
`;

const Promo = styled.div`
  flex: 1;
  display: flex;
  flex-direction: column;
  align-items: center;
  padding: 43px 4px 0 0;
`;

const PromoText = styled.div`
  font-size: 15.4px;
  font-weight: 600;
  line-height: 20px;
  text-align: center;
  color: #4b4b4b;
`;

const TrialButton = styled.div`
  width: 215px;
  height: 50px;
  margin-top: 24px;
  display: flex;
  align-items: center;
  justify-content: center;
  font-size: 14.5px;
  color: #fff;
  background: #2680eb;
  border-radius: 25px;
`;

const Taskbar = styled.div`
  position: relative;
  height: 60px;
  flex: none;
  display: flex;
  align-items: center;
  justify-content: center;
  background: linear-gradient(90deg, #efdecb 0%, #eddcc8 40%, #e8dccb 60%, #ecdfce 85%, #e6dfce 100%);
`;

const AppStrip = styled.div`
  display: flex;
`;

const AppSlot = styled.div`
  position: relative;
  width: 55px;
  height: 60px;
  display: flex;
  align-items: center;
  justify-content: center;
  &::before {
    content: '';
    display: ${(p) => (p.$active ? 'block' : 'none')};
    position: absolute;
    left: 3px;
    right: 4px;
    top: 6px;
    bottom: 6px;
    background: rgba(255, 255, 255, 0.5);
    border-radius: 4px;
  }
  & > * {
    position: relative;
  }
`;

const OpenDot = styled.span`
  position: absolute !important;
  left: 24px;
  bottom: 6px;
  width: 7px;
  height: 4px;
  border-radius: 2px;
  background: #808080;
`;

const ActiveBar = styled.span`
  position: absolute !important;
  left: 18px;
  bottom: 6px;
  width: 20px;
  height: 4px;
  border-radius: 2px;
  background: #0078d4;
`;

const AppOverlayWrap = styled.div`
  position: relative;
  line-height: 0;
`;

const ProfileBubble = styled.span`
  position: absolute;
  left: 14px;
  top: -8px;
  width: 19px;
  height: 19px;
  border-radius: 50%;
  background: radial-gradient(circle at 50% 70%, #3f6d68, #3b3b3f 60%, #6a6a70);
`;

const Tray = styled.div`
  position: absolute;
  right: 24px;
  top: 0;
  bottom: 0;
  display: flex;
  align-items: center;
  gap: 10px;
`;

const TrayCloud = styled.div`
  margin-left: -3px;
  line-height: 0;
`;

const Lang = styled.div`
  display: flex;
  flex-direction: column;
  align-items: center;
  margin-left: 6px;
  font-family: 'Open Sans', sans-serif;
  font-size: 13.5px;
  line-height: 19px;
  color: #222;
`;

const TrayIcons = styled.div`
  display: flex;
  align-items: center;
  gap: 9px;
  margin-left: 13px;
`;

const Clock = styled.div`
  display: flex;
  flex-direction: column;
  align-items: flex-end;
  margin-left: 9px;
  font-family: 'Open Sans', sans-serif;
  font-size: 14.4px;
  line-height: 20px;
  color: #222;
`;
